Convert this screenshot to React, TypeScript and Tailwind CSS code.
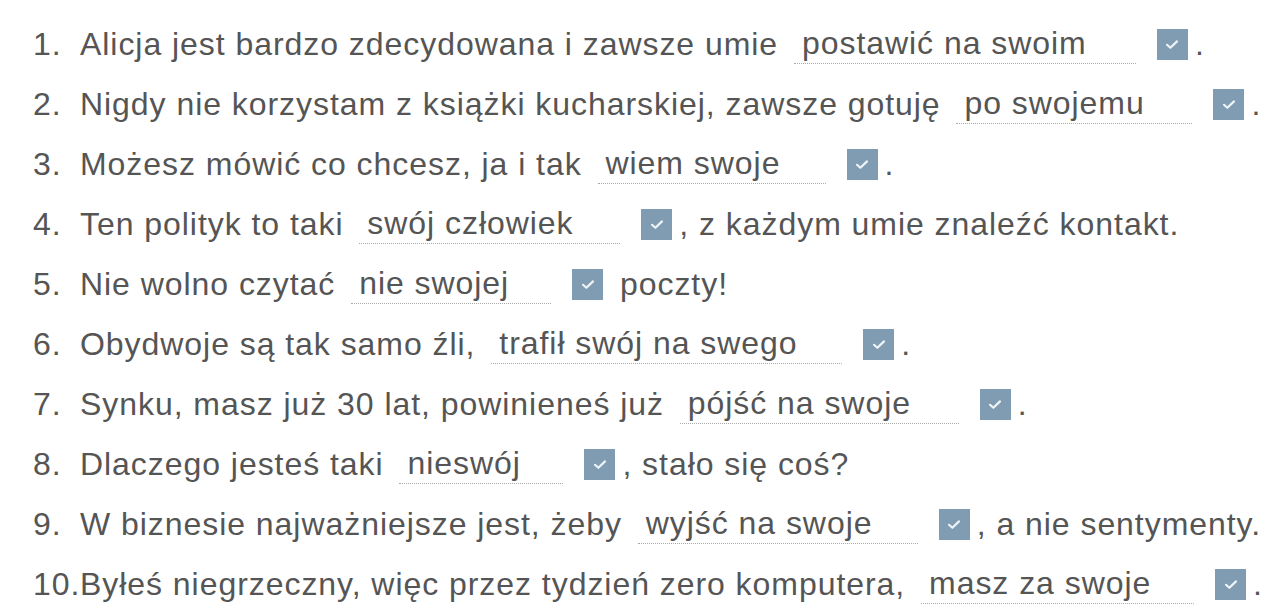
import React from "react";

type Row = {
  before: string;
  answer: string;
  width: number;
  after: string;
};

const rows: Row[] = [
  { before: "Alicja jest bardzo zdecydowana i zawsze umie", answer: "postawić na swoim", width: 342, after: "." },
  { before: "Nigdy nie korzystam z książki kucharskiej, zawsze gotuję", answer: "po swojemu", width: 236, after: "." },
  { before: "Możesz mówić co chcesz, ja i tak", answer: "wiem swoje", width: 228, after: "." },
  { before: "Ten polityk to taki", answer: "swój człowiek", width: 261, after: ", z każdym umie znaleźć kontakt." },
  { before: "Nie wolno czytać", answer: "nie swojej", width: 200, after: "\u00a0poczty!" },
  { before: "Obydwoje są tak samo źli,", answer: "trafił swój na swego", width: 351, after: "." },
  { before: "Synku, masz już 30 lat, powinieneś już", answer: "pójść na swoje", width: 279, after: "." },
  { before: "Dlaczego jesteś taki", answer: "nieswój", width: 164, after: ", stało się coś?" },
  { before: "W biznesie najważniejsze jest, żeby", answer: "wyjść na swoje", width: 280, after: ", a nie sentymenty." },
  { before: "Byłeś niegrzeczny, więc przez tydzień zero komputera,", answer: "masz za swoje", width: 273, after: "." },
];

const CheckBox = () => (
  <span className="inline-flex h-[31px] w-[31px] shrink-0 items-center justify-center bg-[#7f9cb2]">
    <svg width="14" height="11" viewBox="0 0 14 11" fill="none">
      <path d="M2 5.8 L5.4 8.8 L12 2.4" stroke="#eef3f7" strokeWidth="2.2" strokeLinecap="round" strokeLinejoin="round" />
    </svg>
  </span>
);

const App = () => {
  return (
    <div
      className="min-h-[612px] w-[1284px] bg-white pt-[14px] pl-[33px] text-[#555555]"
      style={{ fontFamily: '"Liberation Sans", Arial, sans-serif' }}
    >
      <ol className="flex flex-col">
        {rows.map((r, i) => (
          <li key={i} className="flex h-[60px] items-center whitespace-pre text-[32px] tracking-[0.95px]">
            <span className="w-[47px] shrink-0">{i + 1}.</span>
            <span>{r.before} </span>
            <span
              className="ml-[6px] mr-[21px] shrink-0 border-b border-dotted border-[#a9a9a9] px-[8px] pb-[2px] leading-[36px]"
              style={{ width: r.width }}
            >
              {r.answer}
            </span>
            <CheckBox />
            <span className="ml-[7px]">{r.after}</span>
          </li>
        ))}
      </ol>
    </div>
  );
};

export default App;
